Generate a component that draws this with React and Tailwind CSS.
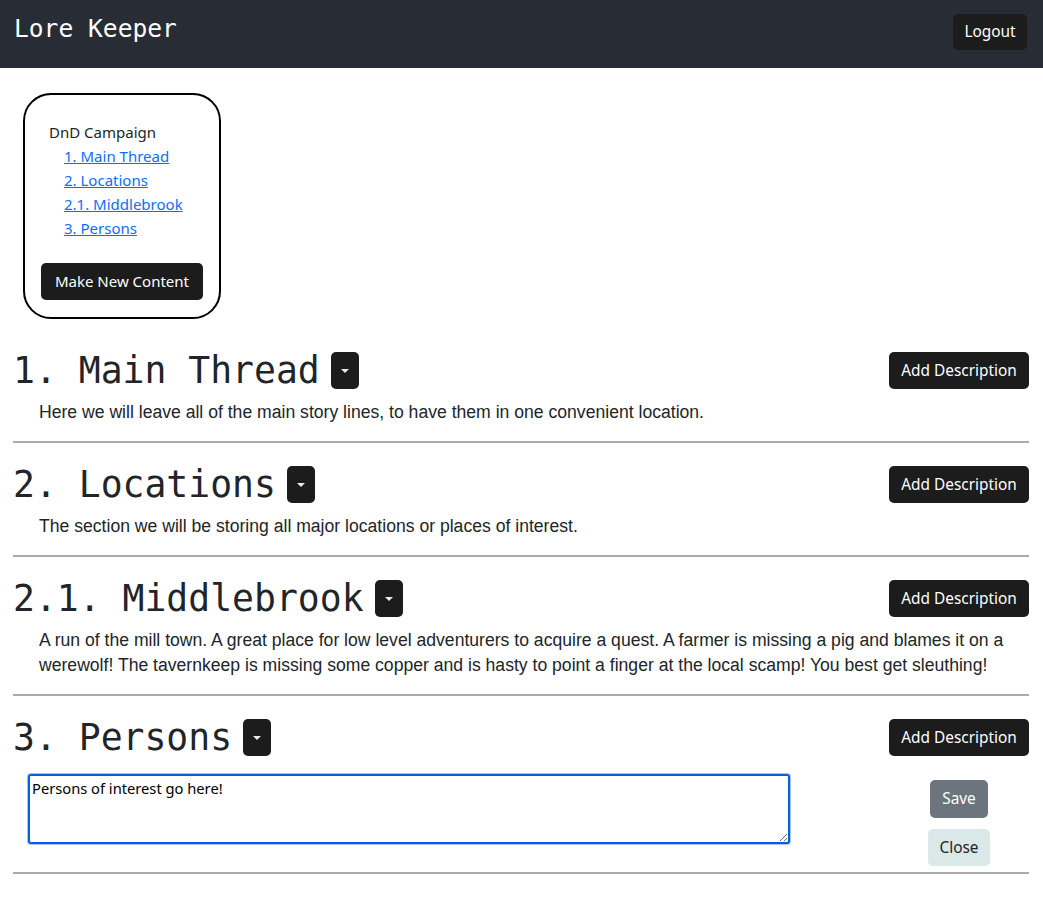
import { useState } from 'react'

const sans = 'font-["Noto_Sans",sans-serif]'
const mono = 'font-["DejaVu_Sans_Mono",monospace]'

const sections = [
  {
    id: 'main',
    title: '1. Main Thread',
    text: 'Here we will leave all of the main story lines, to have them in one convenient location.',
  },
  {
    id: 'locations',
    title: '2. Locations',
    text: 'The section we will be storing all major locations or places of interest.',
  },
  {
    id: 'middlebrook',
    title: '2.1. Middlebrook',
    text: 'A run of the mill town. A great place for low level adventurers to acquire a quest. A farmer is missing a pig and blames it on a werewolf! The tavernkeep is missing some copper and is hasty to point a finger at the local scamp! You best get sleuthing!',
  },
  { id: 'persons', title: '3. Persons', text: null },
]

function Caret() {
  return (
    <button className="w-[28px] h-[37px] rounded-[5px] bg-[#1c1c1c] flex items-center justify-center">
      <span className="w-0 h-0 border-l-[4px] border-r-[4px] border-t-[4px] border-l-transparent border-r-transparent border-t-[#e6eeee]" />
    </button>
  )
}

function Section({ s, editing }) {
  const [draft, setDraft] = useState('Persons of interest go here!')

  return (
    <div>
      <div className="flex items-center justify-between h-[43px] pr-[1px]">
        <div className="flex items-center gap-[11px]">
          <h2 className={`${mono} text-[36.4px] leading-[43px] text-[#212529]`}>{s.title}</h2>
          <Caret />
        </div>
        <button className={`${sans} text-[15.4px] text-white bg-[#1c1c1c] rounded-[5px] w-[140px] h-[37px]`}>
          Add Description
        </button>
      </div>

      {s.text && (
        <p className="font-['Liberation_Sans',Arial,sans-serif] text-[17.6px] leading-[25px] text-[#212529] pl-[26px] pr-[8px] mt-[7.5px] mb-[16.5px]">
          {s.text}
        </p>
      )}

      {editing && (
        <div className="flex items-start justify-between mt-[14px] mb-[6px] pr-[1px]">
          <div className="ml-[14px] p-[1px] rounded-[4px] bg-[#a9c4f0]">
            <textarea
              value={draft}
              onChange={(e) => setDraft(e.target.value)}
              className={`${sans} block w-[762px] h-[70px] bg-white border-2 border-[#0060df] rounded-[3px] px-[2px] py-[2px] text-[14.7px] leading-[20px] text-black outline-none resize-y`}
            />
          </div>
          <div className="w-[140px] flex flex-col items-center gap-[11px] pt-[7px]">
            <button className={`${sans} text-[15.4px] text-white bg-[#6c757d] rounded-[5px] w-[58px] h-[38px]`}>Save</button>
            <button className={`${sans} text-[15.4px] text-[#212529] bg-[#dbe8e8] rounded-[5px] w-[62px] h-[37px]`}>Close</button>
          </div>
        </div>
      )}

      <hr className="border-0 h-[2px] bg-[#aaaaaa] mr-[1px] mb-[20px]" />
    </div>
  )
}

export default function App() {
  return (
    <div className={`${sans} min-h-screen bg-white`}>
      <header className="h-[68px] bg-[#282c34] flex items-start justify-between px-[14px] pt-[14px]">
        <h1 className={`${mono} text-[24.6px] leading-[30px] text-white`}>Lore Keeper</h1>
        <button className="mr-[2px] h-[36px] w-[74px] rounded-[5px] bg-[#1c1c1c] text-white text-[15.4px]">Logout</button>
      </header>

      <div className="px-[13px] pt-[25px]">
        <nav className="ml-[10px] w-[198px] border-2 border-black rounded-[28px] pt-[25px] pb-[17px] px-[16px] mb-[30px]">
          <div className="pl-[8px] text-[15px] leading-[24px] text-[#212529]">DnD Campaign</div>
          <ul className="pl-[23px] text-[15px] leading-[24px]">
            {sections.map((s) => (
              <li key={s.id}>
                <a href={`#${s.id}`} className="text-[#0d6efd] underline">{s.title}</a>
              </li>
            ))}
          </ul>
          <button className="mt-[23px] w-[162px] h-[37px] rounded-[5px] bg-[#1c1c1c] text-white text-[15px]">
            Make New Content
          </button>
        </nav>

        {sections.map((s) => (
          <Section key={s.id} s={s} editing={s.id === 'persons'} />
        ))}
      </div>
    </div>
  )
}
